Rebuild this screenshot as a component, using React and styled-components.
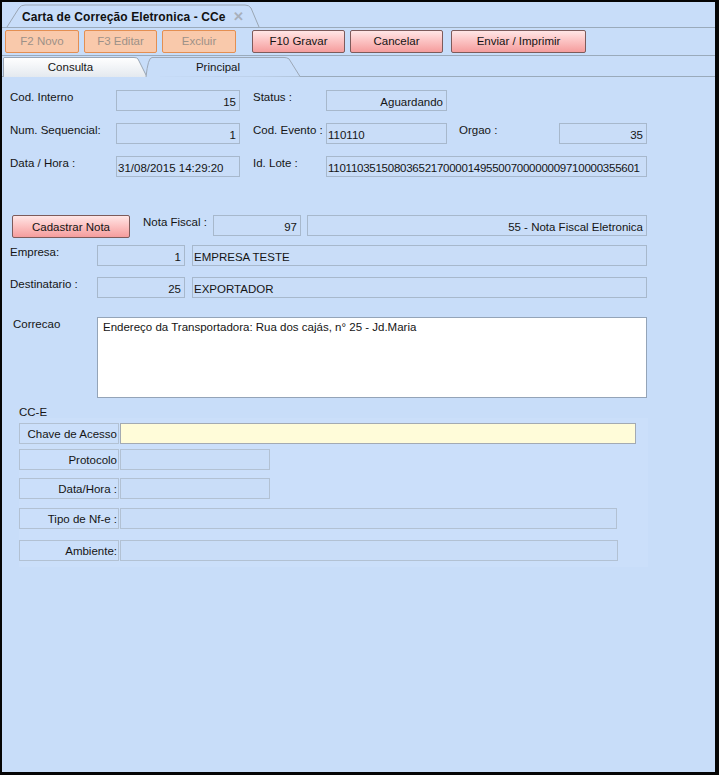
import React from "react";
import styled, { createGlobalStyle } from "styled-components";

const Global = createGlobalStyle`
  html, body { margin: 0; padding: 0; background: #000; }
  body { font-family: "Liberation Sans", Arial, sans-serif; font-size: 11px; color: #151515; }
  * { box-sizing: border-box; }
`;

const Frame = styled.div`
  width: 719px;
  height: 775px;
  border-style: solid;
  border-color: #050505;
  border-width: 2px 4px 3px 2px;
  background: #c8ddf9;
  display: flex;
  flex-direction: column;
`;

const TitleBar = styled.div`
  height: 26px;
  border-bottom: 1px solid #9aaabb;
  display: flex;
  align-items: flex-end;
  padding-left: 5px;
`;

const TitleTab = styled.div`
  position: relative;
  width: 252px;
  height: 22px;
  display: flex;
  align-items: center;
  padding-left: 15px;
  padding-top: 1px;
  font-weight: bold;
  font-size: 12px;
  color: #111;
`;

const TabShape = styled.svg`
  position: absolute;
  left: 0;
  top: 0;
  width: 100%;
  height: 100%;
  overflow: visible;
`;

const TitleText = styled.span`
  position: relative;
  letter-spacing: 0.1px;
`;

const CloseX = styled.span`
  position: relative;
  margin-left: 8px;
  color: #a8b0bb;
  font-weight: bold;
  font-size: 13px;
`;

const Toolbar = styled.div`
  height: 28px;
  border-bottom: 1px solid #9aaabb;
  display: flex;
  align-items: center;
  padding-left: 3px;
  padding-bottom: 1px;
`;

const Button = styled.button`
  width: ${(p) => p.w}px;
  height: 23px;
  margin-left: ${(p) => p.ml || 0}px;
  font-family: "Liberation Sans", Arial, sans-serif;
  font-size: 11.5px;
  border-radius: 2px;
  padding: 0;
  cursor: default;
  ${(p) =>
    p.disabled
      ? `
    background: #f9c9ab;
    border: 1px solid #e48f52;
    color: #9d9188;
  `
      : `
    background: linear-gradient(#ffe6e6 0%, #fcc4c4 45%, #f59d9d 100%);
    border: 1px solid #7d5b5b;
    color: #141414;
  `}
`;

const TabsBar = styled.div`
  height: 21px;
  border-bottom: 1px solid #9aaabb;
  display: flex;
  align-items: flex-end;
  padding-left: 1px;
`;

const Tab = styled.div`
  position: relative;
  width: ${(p) => p.w}px;
  height: 20px;
  display: flex;
  align-items: center;
  justify-content: center;
  padding-right: ${(p) => p.pr || 0}px;
  font-size: 11.5px;
  margin-bottom: -1px;
  z-index: ${(p) => (p.active ? 2 : 1)};
`;

const TabLabel = styled.span`
  position: relative;
`;

const Content = styled.div`
  flex: 1;
  padding-left: 8px;
  display: flex;
  flex-direction: column;
  position: relative;
`;

const Row = styled.div`
  display: flex;
  align-items: flex-start;
  margin-top: ${(p) => p.mt}px;
  padding-left: ${(p) => p.pl || 0}px;
`;

const Label = styled.div`
  width: ${(p) => p.w}px;
  margin-left: ${(p) => p.ml || 0}px;
  padding-top: 1px;
  white-space: nowrap;
  font-size: 11.5px;
`;

const Field = styled.div`
  width: ${(p) => p.w}px;
  height: 21px;
  margin-left: ${(p) => p.ml || 0}px;
  border: 1px solid #a7b8cc;
  background: #c9ddf8;
  display: flex;
  align-items: center;
  justify-content: ${(p) => (p.right ? "flex-end" : "flex-start")};
  padding: 2px 3px 0 1px;
  white-space: nowrap;
  overflow: hidden;
  font-size: 11.5px;
  letter-spacing: ${(p) => p.ls || 0}px;
`;

const TextArea = styled.div`
  width: 550px;
  height: 81px;
  border: 1px solid #94a4b8;
  background: #ffffff;
  padding: 3px 5px;
  font-size: 11.5px;
`;

const CCLabel = styled.div`
  margin-top: 8px;
  padding-left: 9px;
  font-size: 11.5px;
`;

const Group = styled.div`
  margin-left: 9px;
  width: 629px;
  height: 149px;
  background: #cbdffa;
  padding: 5px 0 0 0;
  display: flex;
  flex-direction: column;
`;

const GroupRow = styled.div`
  display: flex;
  margin-top: ${(p) => p.mt || 0}px;
`;

const BoxLabel = styled.div`
  width: 100px;
  height: 21px;
  border: 1px solid #b2c1d3;
  display: flex;
  align-items: center;
  justify-content: flex-end;
  padding: 1px 1px 0 0;
  font-size: 11.5px;
`;

const GroupInput = styled.div`
  width: ${(p) => p.w}px;
  height: 21px;
  margin-left: 1px;
  border: 1px solid ${(p) => (p.yellow ? "#a3aab2" : "#b2c1d3")};
  background: ${(p) => (p.yellow ? "#fffcd9" : "#c9ddf8")};
`;

export default function App() {
  return (
    <>
      <Global />
      <Frame>
        <TitleBar>
          <TitleTab>
            <TabShape viewBox="0 0 252 22" preserveAspectRatio="none">
              <path
                d="M0,22 L12,3 Q14,0 18,0 L238,0 Q242,0 244,3 L252,22"
                fill="#c8ddf9"
                stroke="#9aa6b4"
                strokeWidth="1"
              />
            </TabShape>
            <TitleText>Carta de Correção Eletronica - CCe</TitleText>
            <CloseX>✕</CloseX>
          </TitleTab>
        </TitleBar>
        <Toolbar>
          <Button w={74} disabled>F2 Novo</Button>
          <Button w={73} ml={5} disabled>F3 Editar</Button>
          <Button w={74} ml={5} disabled>Excluir</Button>
          <Button w={93} ml={16}>F10 Gravar</Button>
          <Button w={93} ml={5}>Cancelar</Button>
          <Button w={135} ml={8}>Enviar / Imprimir</Button>
        </Toolbar>
        <TabsBar>
          <Tab w={145} pr={10}>
            <TabShape viewBox="0 0 145 20" preserveAspectRatio="none">
              <defs>
                <linearGradient id="tg" x1="0" y1="0" x2="0" y2="1">
                  <stop offset="0" stopColor="#ffffff" />
                  <stop offset="1" stopColor="#e4e9ef" />
                </linearGradient>
              </defs>
              <path
                d="M0.5,20 L0.5,1 Q0.5,0.5 2,0.5 L131,0.5 Q134,0.5 135,2 L144,20"
                fill="url(#tg)"
                stroke="#9aa6b4"
                strokeWidth="1"
              />
            </TabShape>
            <TabLabel>Consulta</TabLabel>
          </Tab>
          <Tab w={152} pr={12} active>
            <TabShape viewBox="0 0 152 21" preserveAspectRatio="none">
              <path
                d="M-2,21 L-2,21 Q0,0.5 4,0.5 L136,0.5 Q139,0.5 141,2 L152,20.5"
                fill="#c8ddf9"
                stroke="#9aa6b4"
                strokeWidth="1"
              />
            </TabShape>
            <TabLabel>Principal</TabLabel>
          </Tab>
        </TabsBar>
        <Content>
          <Row mt={13}>
            <Label w={106}>Cod. Interno</Label>
            <Field w={124} right>15</Field>
            <Label w={73} ml={13}>Status :</Label>
            <Field w={121} right>Aguardando</Field>
          </Row>
          <Row mt={12}>
            <Label w={106}>Num. Sequencial:</Label>
            <Field w={124} right>1</Field>
            <Label w={73} ml={13}>Cod. Evento :</Label>
            <Field w={121}>110110</Field>
            <Label w={100} ml={12}>Orgao :</Label>
            <Field w={88} right>35</Field>
          </Row>
          <Row mt={12}>
            <Label w={106}>Data / Hora :</Label>
            <Field w={124}>31/08/2015 14:29:20</Field>
            <Label w={73} ml={13}>Id. Lote :</Label>
            <Field w={321} ls={-0.25}>110110351508036521700001495500700000009710000355601</Field>
          </Row>
          <Row mt={38} pl={2}>
            <Button w={118}>Cadastrar Nota</Button>
            <Label w={70} ml={13}>Nota Fiscal :</Label>
            <Field w={88} right>97</Field>
            <Field w={340} ml={6} right>55 - Nota Fiscal Eletronica</Field>
          </Row>
          <Row mt={7}>
            <Label w={87}>Empresa:</Label>
            <Field w={88} right>1</Field>
            <Field w={455} ml={7}>EMPRESA TESTE</Field>
          </Row>
          <Row mt={11}>
            <Label w={87}>Destinatario :</Label>
            <Field w={88} right>25</Field>
            <Field w={455} ml={7}>EXPORTADOR</Field>
          </Row>
          <Row mt={19} pl={3}>
            <Label w={84}>Correcao</Label>
            <TextArea>Endereço da Transportadora: Rua dos cajás, n° 25 - Jd.Maria</TextArea>
          </Row>
          <CCLabel>CC-E</CCLabel>
          <Group>
            <GroupRow>
              <BoxLabel>Chave de Acesso</BoxLabel>
              <GroupInput w={516} yellow />
            </GroupRow>
            <GroupRow mt={5}>
              <BoxLabel>Protocolo</BoxLabel>
              <GroupInput w={150} />
            </GroupRow>
            <GroupRow mt={8}>
              <BoxLabel>Data/Hora :</BoxLabel>
              <GroupInput w={150} />
            </GroupRow>
            <GroupRow mt={9}>
              <BoxLabel>Tipo de Nf-e :</BoxLabel>
              <GroupInput w={497} />
            </GroupRow>
            <GroupRow mt={11}>
              <BoxLabel>Ambiente:</BoxLabel>
              <GroupInput w={498} />
            </GroupRow>
          </Group>
        </Content>
      </Frame>
    </>
  );
}
